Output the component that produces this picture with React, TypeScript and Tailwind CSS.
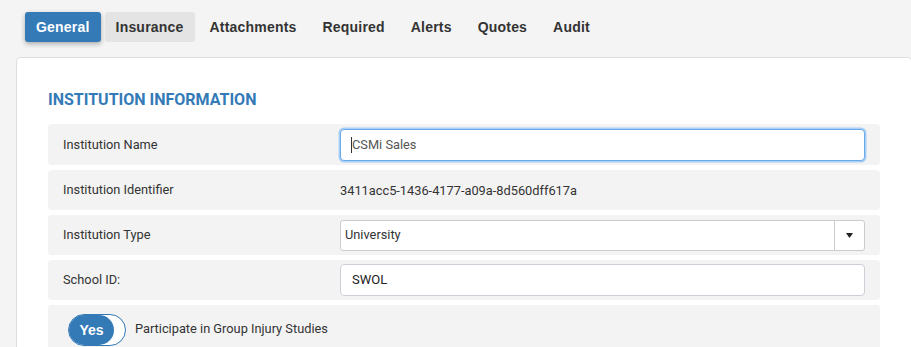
const tabs = ["General", "Insurance", "Attachments", "Required", "Alerts", "Quotes", "Audit"];

const Row = ({ label, children }: { label: string; children: React.ReactNode }) => (
  <div className="flex items-center min-h-[40px] px-[15px] rounded-[4px] bg-[#f3f3f3]">
    <div className="w-[277px] shrink-0 text-[12.8px] text-[#333]">{label}</div>
    <div className="flex-1">{children}</div>
  </div>
);

const App = () => {
  return (
    <div className="min-h-[347px] bg-[#f4f4f4] pt-3 overflow-hidden" style={{ fontFamily: "Roboto, 'Liberation Sans', sans-serif" }}>
      <div className="flex gap-1 pl-[25px]" style={{ fontFamily: "'Liberation Sans', Arial, sans-serif" }}>
        {tabs.map((t, i) => (
          <div
            key={t}
            className={`h-[30px] px-[11px] flex items-center rounded-[3px] text-[14px] font-bold tracking-[0.2px] ${
              i === 0
                ? "bg-[#337ab7] text-white shadow-[0_2px_5px_rgba(0,0,0,0.3)]"
                : i === 1
                ? "bg-[#e4e4e4] text-[#333]"
                : "text-[#333]"
            }`}
          >
            {t}
          </div>
        ))}
      </div>

      <div className="ml-4 mt-[15px] w-[896px] bg-white border border-[#dedede] rounded-[4px] px-[31px] pt-[32px] pb-4">
        <h2 className="text-[16px] font-bold text-[#337ab7] leading-5 mb-[14px]">INSTITUTION INFORMATION</h2>
        <div className="flex flex-col gap-[5px]">
          <div className="flex items-center h-[41px] px-[15px] rounded-[4px] bg-[#f3f3f3]">
            <div className="w-[277px] shrink-0 text-[12.8px] text-[#333]">Institution Name</div>
            <div className="flex-1 h-[32px] flex items-center bg-white rounded-[4px] border border-[#6aaae8] shadow-[0_0_0_1.5px_#a9cff6] pl-[10px] text-[12.8px] text-[#555]">
              <span className="border-l border-[#333] leading-4">CSMi Sales</span>
            </div>
          </div>
          <Row label="Institution Identifier">
            <span className="text-[12.8px] text-[#333]">3411acc5-1436-4177-a09a-8d560dff617a</span>
          </Row>
          <Row label="Institution Type">
            <div className="h-[31px] flex bg-white border border-[#ccc] rounded-[3px] text-[12.8px] text-[#333]">
              <div className="flex-1 flex items-center pl-[4px]">University</div>
              <div className="w-[30px] border-l border-[#ccc] flex items-center justify-center">
                <svg width="7" height="5" viewBox="0 0 7 5">
                  <path d="M0 0h7L3.5 5z" fill="#222" />
                </svg>
              </div>
            </div>
          </Row>
          <Row label="School ID:">
            <div className="h-[32px] flex items-center bg-white border border-[#ccd0d6] rounded-[4px] pl-[11px] text-[13px] text-[#222]">
              SWOL
            </div>
          </Row>
          <div className="flex items-start h-[60px] px-[20px] pt-[9px] rounded-[4px] bg-[#f3f3f3]">
            <div className="w-[58px] h-[32px] rounded-full border-[1.5px] border-[#337ab7] bg-white overflow-hidden flex">
              <div
                className="w-[45px] h-full rounded-r-full bg-[#337ab7] text-white text-[14px] font-bold flex items-center justify-center"
                style={{ fontFamily: "'Liberation Sans', Arial, sans-serif" }}
              >
                Yes
              </div>
            </div>
            <span className="ml-[9px] mt-[5px] text-[12.8px] text-[#333]">Participate in Group Injury Studies</span>
          </div>
        </div>
      </div>
    </div>
  );
};

export default App;
